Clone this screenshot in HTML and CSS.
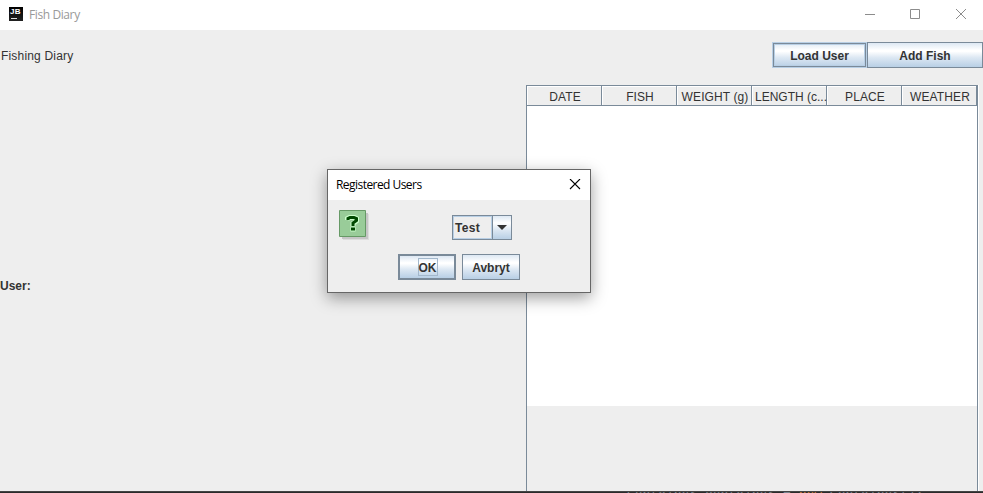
FILE: index.html
```html
<!DOCTYPE html>
<html lang="en">
<head>
<meta charset="utf-8">
<title>Fish Diary</title>
<link rel="stylesheet" href="styles.css">
</head>
<body>
<div class="window">
  <header class="titlebar">
    <span class="logo"><b>JB</b><i></i></span>
    <span class="title">Fish Diary</span>
    <svg class="controls" width="103" height="12" viewBox="0 0 103 12" fill="none" stroke="#8c8c8c">
      <path d="M0 5.500h10M45.500 .5h9v9h-9z"/><path d="M91 0l10 10M101 0l-10 10"/>
    </svg>
  </header>
  <div class="toolbar">
    <span class="heading">Fishing Diary</span>
    <button class="btn load">Load User</button>
    <button class="btn add">Add Fish</button>
  </div>
  <main class="content">
    <div class="user"><span>User:</span></div>
    <section class="table">
      <div class="thead">
        <span>DATE</span><span>FISH</span><span>WEIGHT (g)</span><span class="tight">LENGTH (c...</span><span>PLACE</span><span>WEATHER</span>
      </div>
      <div class="rows"></div>
    </section>
  </main>
  <footer class="editor"><span>Container container = <em>new</em> Container();</span></footer>
</div>
<div class="dialog">
  <div class="dialog-title"><span>Registered Users</span>
    <svg width="12" height="12" viewBox="0 0 12 12" fill="none" stroke="#000" stroke-width="1.100"><path d="M1 0l10 10M11 0L1 10"/></svg>
  </div>
  <div class="dialog-body">
    <svg class="question" width="32" height="32" viewBox="0 0 32 32">
      <path d="M4 4h26v26H4z" fill="#ddd"/><path d="M3 3h26v26H3z" fill="#c6c6c6"/>
      <path d="M.5.5h26v26H.5z" fill="#9c9" stroke="#696"/>
      <g fill="none" stroke="#cfc" stroke-width="5"><path d="M8.500 10V8.500L10.500 7.500h5L17.500 8.500v2.500L14 13.500v2.500"/><path d="M11.500 19h5"/></g>
      <g fill="none" stroke="#004800" stroke-width="3"><path d="M9 10V8.500L11 7.500h4L17.500 8.500V10.500L14 13V16"/><path d="M12 19h4"/></g>
    </svg>
    <div class="form">
      <div class="combo"><span class="value">Test</span><span class="arrow"><svg width="10" height="5" viewBox="0 0 10 5"><path d="M0 0h10L5 5z" fill="#333"/></svg></span></div>
      <div class="actions"><button class="btn ok"><span>OK</span></button><button class="btn cancel">Avbryt</button></div>
    </div>
  </div>
</div>
</body>
</html>
```
FILE: styles.css
```css
* { box-sizing: border-box; }
body { margin: 0; overflow: hidden; background: #eee; color: #333; font: 12px "Liberation Sans", Arial, sans-serif; }
.window { width: 983px; height: 493px; display: flex; flex-direction: column; }
.titlebar { height: 30px; flex: none; background: #fff; display: flex; align-items: center; padding: 0 15px 1px 9px; }
.logo { width: 14px; height: 14px; background: linear-gradient(#000, #222); color: #fff; display: flex; flex-direction: column; font-size: 8px; line-height: 9px; padding: 0 1px; margin-top: -1px; }
.logo b { letter-spacing: .3px; }
.logo i { width: 6px; height: 1px; background: #ddd; margin: 2px 0 0 1px; }
.title { margin-left: 6px; color: #999; font: 12px "Open Sans", sans-serif; letter-spacing: -.4px; }
.controls { margin-left: auto; }
.toolbar { height: 55px; flex: none; display: flex; align-items: flex-start; padding-top: 12px; }
.heading { margin: 6px auto 0 1px; line-height: 16px; letter-spacing: .18px; }
.btn { height: 26px; padding: 1px 0 0; border: 1px solid #7a8a99; font: bold 12px "Liberation Sans", Arial, sans-serif; color: #333; background: linear-gradient(#dde8f3 0, #fff 30%, #fff 35%, #dde8f3 60%, #b8cfe5 100%); }
.load { width: 95px; border: 1px solid #b8cfe5; box-shadow: inset 0 0 0 1px #7a8a99, inset 0 0 0 2px #b8cfe5; }
.add { width: 116px; }
.content { flex: 1; display: flex; min-height: 0; }
.user { width: 526px; padding-top: 193px; font-weight: bold; line-height: 16px; }
.table { width: 452px; border: solid #7a8a99; border-width: 1px 1px 0; box-shadow: 1px 0 #fff; }
.thead { display: grid; grid-template: 20px / repeat(6, 75px); height: 20px; }
.thead span { height: 20px; border: solid #7a8a99; border-width: 0 1px 1px 0; box-shadow: inset 1px 1px #fff; text-align: center; line-height: 22px; white-space: nowrap; padding-left: 2px; letter-spacing: .1px; }
.thead .tight { padding-left: 3px; letter-spacing: 0; }
.rows { height: 300px; background: #fff; }
.editor { height: 2px; flex: none; overflow: hidden; background: #2b2b2b; border-top: 1px solid #444; padding-left: 627px; color: #78828c; font: 13px/13px "Liberation Mono", monospace; white-space: pre; }
.editor span { display: block; margin-top: -4px; }
.editor em { color: #cc7832; font-style: normal; }
.dialog { position: absolute; left: 327px; top: 169px; width: 264px; height: 124px; border: 1px solid #666; background: #eee; box-shadow: 0 5px 15px rgba(0, 0, 0, .38); }
.dialog-title { height: 30px; background: #fff; display: flex; align-items: center; justify-content: space-between; padding: 0 9px 1px 8px; font: 12px "Open Sans", sans-serif; color: #000; letter-spacing: -.55px; }
.dialog-body { display: flex; padding: 10px 0 0 11px; }
.question { flex: none; }
.form { margin-left: 27px; padding-top: 5px; }
.combo { width: 60px; height: 25px; margin-left: 54px; display: flex; border: 1px solid #7a8a99; font-weight: bold; }
.value { width: 39px; border: 1px solid #b8cfe5; line-height: 22px; padding-left: 1px; letter-spacing: .35px; }
.arrow { flex: 1; border-left: 1px solid #7a8a99; display: flex; align-items: center; justify-content: center; background: linear-gradient(#dde8f3, #fff 30%, #dde8f3 60%, #b8cfe5); }
.actions { display: flex; gap: 6px; margin-top: 14px; }
.actions .btn { width: 58px; }
.actions .ok { border-width: 2px; padding: 0 0 0 1px; }
.ok span { display: inline-block; height: 18px; line-height: 18px; border: 1px solid #a3b8cc; }
```
